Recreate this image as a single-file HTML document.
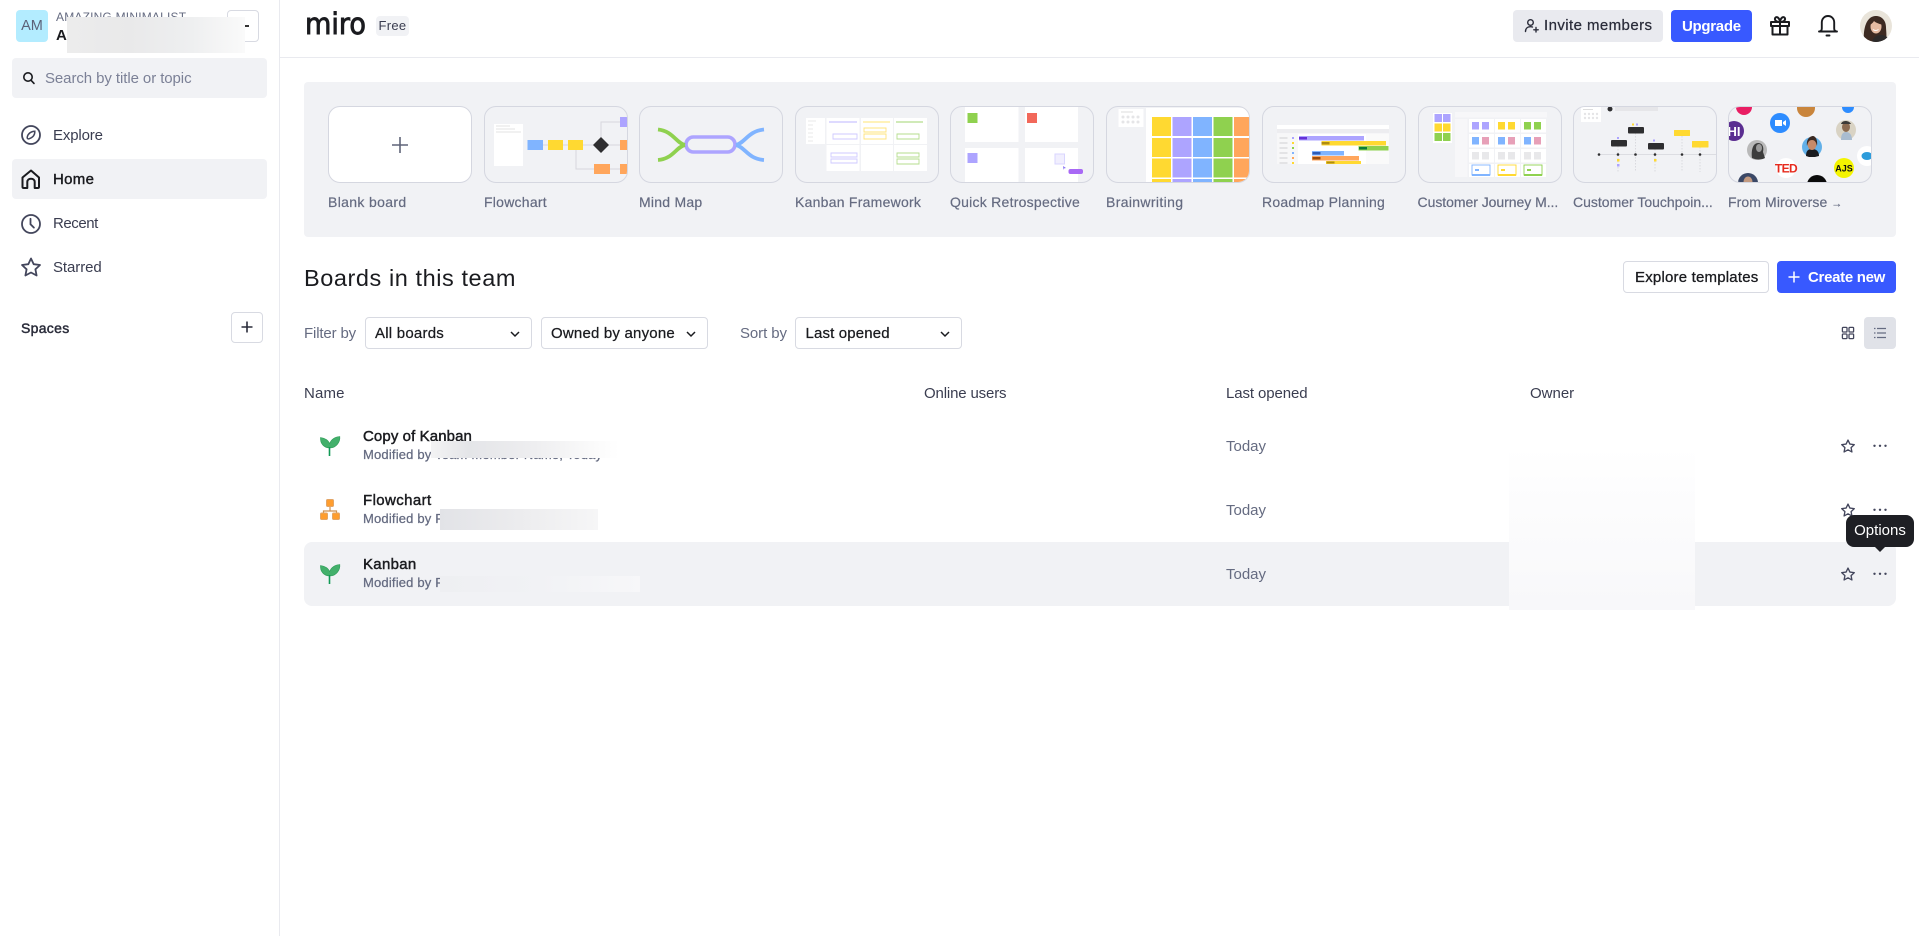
<!DOCTYPE html>
<html lang="en"><head><meta charset="utf-8"><title>Miro</title>
<style>
html,body{margin:0;padding:0;background:#fff;width:1919px;height:936px;overflow:hidden}
body{position:relative;font-family:"Liberation Sans",Arial,sans-serif;font-size:15px;color:#1a1b1f;letter-spacing:0}
.a,.t{position:absolute}
.t{white-space:nowrap;line-height:20px}
.g{color:#656b81}
.m{-webkit-text-stroke:.25px currentColor}
.b{font-weight:700}
.box{position:absolute;box-sizing:border-box;border-radius:4px}
.sel{position:absolute;box-sizing:border-box;top:317px;height:32px;width:167px;border:1px solid #d8dae2;border-radius:4px;background:#fff}
.card{position:absolute;top:106px;width:144px;height:77px;box-sizing:border-box;border:1px solid #d5d7e0;border-radius:12px;overflow:hidden;background:#f1f2f5}
.card svg{position:absolute;left:-1px;top:-1px;display:block}
.lab{position:absolute;top:192px;line-height:20px;font-size:14px;color:#656b81;white-space:nowrap;letter-spacing:.25px;-webkit-text-stroke:.2px #656b81}
svg{position:absolute;overflow:visible}
</style></head><body>

<!-- sidebar -->
<div class="a" style="left:279px;top:0;width:1px;height:936px;background:#e9eaef"></div>
<div class="box" style="left:16px;top:10px;width:32px;height:32px;background:#b3ecff;color:#5c6178;font-size:14.5px;line-height:32px;text-align:center;letter-spacing:0">AM</div>
<div class="t g" style="left:56px;top:7px;font-size:12px;letter-spacing:.2px">AMAZING MINIMALIST</div>
<div class="t b" style="left:56px;top:26px;font-size:15px">A</div>
<div class="box" style="left:227px;top:10px;width:32px;height:32px;border:1px solid #d8dae2;background:#fff"></div>
<div class="a" style="left:245px;top:25px;width:4px;height:2px;background:#333"></div>
<div class="a" style="left:67px;top:17px;width:178px;height:36px;background:linear-gradient(90deg,#ececec,#e9e9ea 35%,#eeeff0 70%,#fafafa)"></div>

<div class="box" style="left:12px;top:58px;width:255px;height:40px;background:#f1f2f5"></div>
<svg style="left:22px;top:71px" width="14" height="16" viewBox="0 0 14 16" fill="none" stroke="#1a1b1f" stroke-width="1.6"><circle cx="6" cy="6" r="4.2"/><path d="M9.2 9.400l2.800 3" stroke-linecap="round"/></svg>
<div class="t" style="left:45px;top:69px;color:#7b8096;letter-spacing:-.08px">Search by title or topic</div>

<svg style="left:21px;top:125px" width="20" height="20" viewBox="0 0 20 20" fill="none" stroke="#43465c" stroke-width="1.8"><circle cx="10" cy="10" r="9"/><path d="M13.8 6.2c.2 3.4-1.6 6.2-5.8 7.6-1.2.3-1.9-.4-1.8-1.6.6-3.3 3.6-5.9 7.6-6z" stroke-width="1.5"/></svg>
<div class="t" style="left:53px;top:126px;color:#3a3d50;letter-spacing:-.15px">Explore</div>

<div class="box" style="left:12px;top:159px;width:255px;height:40px;background:#f1f2f5"></div>
<svg style="left:21px;top:169px" width="20" height="20" viewBox="0 0 20 20" fill="none" stroke="#1a1b1f" stroke-width="2" stroke-linejoin="round"><path d="M1.5 8.5L10 1.5l8 7v9.2c0 .8-.5 1.3-1.3 1.3h-3V13c0-2-1.500-3.300-3.700-3.300S6.300 11 6.300 13v6h-3.500c-.8 0-1.300-.5-1.300-1.300z"/></svg>
<div class="t m" style="left:53px;top:170px;letter-spacing:.3px;-webkit-text-stroke:.4px #1a1b1f">Home</div>

<svg style="left:21px;top:214px" width="20" height="20" viewBox="0 0 20 20" fill="none" stroke="#43465c" stroke-width="1.8" stroke-linecap="round"><circle cx="10" cy="10" r="9"/><path d="M9.500 4.800v5.400l3.400 3.400"/></svg>
<div class="t" style="left:53px;top:214px;color:#3a3d50;letter-spacing:-.45px">Recent</div>

<svg style="left:21px;top:257px" width="20" height="20" viewBox="0 0 20 20" fill="none" stroke="#43465c" stroke-width="1.8" stroke-linejoin="round"><path d="M10 1.500l2.700 5.700 6.300.8-4.600 4.300 1.200 6.200L10 15.500l-5.600 3 1.200-6.200L1 8l6.300-.8z"/></svg>
<div class="t" style="left:53px;top:258px;color:#3a3d50;letter-spacing:-.08px">Starred</div>

<div class="t b" style="left:21px;top:318px;font-size:14px;color:#2a2c3a;letter-spacing:.3px;font-weight:400;-webkit-text-stroke:.45px #2a2c3a">Spaces</div>
<div class="box" style="left:231px;top:312px;width:32px;height:31px;border:1px solid #d8dae2"></div>
<svg style="left:241px;top:321px" width="12" height="12" fill="none" stroke="#2a2c3a" stroke-width="1.600"><path d="M6 .5v11M.5 6h11"/></svg>

<!-- top bar -->
<div class="a" style="left:280px;top:57px;width:1639px;height:1px;background:#e9eaef"></div>
<svg style="left:300px;top:0" width="80" height="50" viewBox="0 0 80 50"><text x="5" y="34" font-family="DejaVu Sans,sans-serif" font-size="29" fill="#1a1b1f" stroke="#1a1b1f" stroke-width=".9" textLength="61" lengthAdjust="spacingAndGlyphs">miro</text></svg>
<div class="box" style="left:376px;top:16px;width:33px;height:20px;background:#f1f2f5;font-size:13px;line-height:20px;text-align:center;color:#3a3d50;letter-spacing:.3px">Free</div>

<div class="box" style="left:1513px;top:10px;width:150px;height:32px;background:#e9eaef"></div>
<svg style="left:1524px;top:18px" width="16" height="16" viewBox="0 0 16 16" fill="none" stroke="#2a2c3a" stroke-width="1.400" stroke-linecap="round"><circle cx="6.500" cy="4.500" r="2.800"/><path d="M1.500 13.500c0-3 2-4.800 5-4.800 .8 0 1.400.1 2 .3M12 9.500v4.500M9.800 11.800h4.400"/></svg>
<div class="t m" style="left:1544px;top:15.500px;color:#2a2c3a;letter-spacing:.42px">Invite members</div>
<div class="box" style="left:1671px;top:10px;width:81px;height:32px;background:#3859ff"></div>
<div class="t b" style="left:1682px;top:16.500px;color:#fff;letter-spacing:-.3px">Upgrade</div>
<svg style="left:1770px;top:15px" width="20" height="21" viewBox="0 0 20 21" fill="none" stroke="#1a1b1f" stroke-width="2" stroke-linejoin="round"><path d="M1 7h18v4H1zM2.500 11h15v8.500h-15zM10 7v12.500M10 7C8 7 5.500 6.500 5 4.500 4.600 2.800 6.300 1.500 7.800 2.500 9 3.300 10 5.500 10 7zM10 7c2 0 4.500-.5 5-2.500.4-1.700-1.300-3-2.800-2C11 3.300 10 5.500 10 7z"/></svg>
<svg style="left:1818px;top:15px" width="20" height="22" viewBox="0 0 20 22" fill="none" stroke="#1a1b1f" stroke-width="1.900" stroke-linecap="round" stroke-linejoin="round"><path d="M1 16.500c2 0 2.800-1 2.800-3V7.500C3.800 3.800 6.400 1 10 1s6.200 2.800 6.200 6.500v6c0 2 .8 3 2.800 3zM8.500 20.500h3"/></svg>
<svg style="left:1860px;top:10px" width="32" height="32" viewBox="0 0 32 32"><defs><clipPath id="av"><circle cx="16" cy="16" r="16"/></clipPath></defs><g clip-path="url(#av)"><rect width="32" height="32" fill="#e9e4da"/><path d="M4 32C3 22 5 7 15 6c7-.5 11 5 11 11 0 3 1 8 0 15z" fill="#3d2a22"/><ellipse cx="16" cy="16.500" rx="5.500" ry="7" fill="#e6bba2"/><path d="M9 16c1-6 7-9 11-7 2 1 3 3 3 6-3-1-7-2-9-4-1 2-3 3-5 5z" fill="#3d2a22"/><path d="M12 32c1-5 5-7 9-7 5 0 8 3 9 7z" fill="#2c2a2a"/><path d="M13 19.500c1.500 1.300 3.500 1.300 5.500 0" stroke="#fff" stroke-width="1" fill="none"/></g></svg>

<!-- template panel -->
<div class="box" style="left:304px;top:82px;width:1592px;height:155px;background:#f1f2f5"></div>

<div class="card" style="left:328px;background:#fff"><svg style="left:49px;top:15.500px" width="44" height="44"><path d="M22 14v16M14 22h16" stroke="#5f6478" stroke-width="1.600" fill="none"/></svg></div>
<div class="lab" style="left:328px;letter-spacing:.35px">Blank board</div>

<div class="card" style="left:484px"><svg width="144" height="77"><rect x="10" y="18" width="29" height="42" fill="#fff"/><path d="M12 20h14M12 23h19M12 26h25" stroke="#e3e3e3" stroke-width="1"/><path d="M59 39h5M79 39h5M99 39h12M123 39h13M117 31V16h19M92 44v19h18M126 63h10" stroke="#d6d7dd" stroke-width="1" fill="none"/><rect x="43.500" y="34" width="15.500" height="10" fill="#80b4ff"/><rect x="64" y="34" width="15" height="10" fill="#ffd931"/><rect x="84" y="34" width="15" height="10" fill="#ffd931"/><path d="M117 31l8 8-8 8-8-8z" fill="#2e2e30"/><rect x="136" y="11" width="7" height="10" fill="#ada4ff"/><rect x="136" y="34" width="7" height="10" fill="#ffa65c"/><rect x="110" y="58" width="16" height="10" fill="#ffa65c"/><rect x="136" y="58" width="7" height="10" fill="#ffa65c"/></svg></div>
<div class="lab" style="left:484px">Flowchart</div>

<div class="card" style="left:639px"><svg width="144" height="77"><rect x="47" y="31" width="49" height="15" rx="7.500" fill="#f1f2f5" stroke="#ada4ff" stroke-width="3.600"/><path d="M46 39c-9-2-12-14-27-15.500M46 39c-9 2-12 14-27 15" stroke="#8fd14f" stroke-width="3.800" fill="none"/><path d="M97 39c9-2 12-14 28-15.500M97 39c9 2 12 14 28 15" stroke="#80b4ff" stroke-width="3.800" fill="none"/></svg></div>
<div class="lab" style="left:639px">Mind Map</div>

<div class="card" style="left:795px"><svg width="144" height="77"><rect x="11" y="12" width="19" height="26" fill="#fff"/><path d="M13 15h8M13 19h5M13 23h5M13 27h5M13 31h5M13 35h5" stroke="#e2e2e2" stroke-width=".8"/><g fill="#fff"><rect x="31.500" y="12" width="33" height="26"/><rect x="66" y="12" width="32" height="26"/><rect x="99" y="12" width="33" height="26"/><rect x="31.500" y="39" width="33" height="26"/><rect x="66" y="39" width="32" height="26"/><rect x="99" y="39" width="33" height="26"/></g><path d="M34 16h28" stroke="#c9c4ff" stroke-width="1.200"/><path d="M68 16h27" stroke="#ffe98f" stroke-width="1.200"/><path d="M101 16h27" stroke="#b5dd8e" stroke-width="1.200"/><g fill="none" stroke-width=".9"><path d="M38 28h24v5H38zM36 47h26v4H36zM36 53h26v4H36z" stroke="#cfcaff"/><path d="M69 22h22v4H69zM69 28h22v5H69z" stroke="#ffe47c"/><path d="M102 28h22v5h-22zM102 47h22v4h-22zM102 53h22v5h-22z" stroke="#b5dd8e"/></g></svg></div>
<div class="lab" style="left:795px">Kanban Framework</div>

<div class="card" style="left:950px"><svg width="144" height="77"><g fill="#fff"><rect x="15" y="1" width="53.500" height="35"/><rect x="75" y="1" width="53" height="35"/><rect x="15" y="42" width="53.500" height="35"/><rect x="75" y="42" width="53" height="35"/></g><rect x="17.500" y="7" width="10" height="10" fill="#8fd14f"/><rect x="77" y="7" width="10" height="10" fill="#f2685a"/><rect x="17.500" y="47" width="10" height="10" fill="#ada4ff"/><rect x="105" y="48" width="9.500" height="10" fill="#f1effe" stroke="#d9d5ff"/><path d="M113 60l3 2-2 .5-.5 1.500z" fill="#8a75f5"/><rect x="118.500" y="63" width="14.500" height="5" rx="2" fill="#a868f5"/></svg></div>
<div class="lab" style="left:950px">Quick Retrospective</div>

<div class="card" style="left:1106px"><svg width="144" height="77"><rect x="12.500" y="3" width="25" height="18" fill="#fff"/><path d="M15 6h12" stroke="#ddd" stroke-width="1"/><g fill="#e5e5e7"><circle cx="17" cy="11" r="1.500"/><circle cx="22" cy="11" r="1.500"/><circle cx="27" cy="11" r="1.500"/><circle cx="32" cy="11" r="1.500"/><circle cx="17" cy="16" r="1.500"/><circle cx="22" cy="16" r="1.500"/><circle cx="27" cy="16" r="1.500"/><circle cx="32" cy="16" r="1.500"/></g><rect x="40" y="2" width="104" height="75" fill="#fff"/><g fill="#ffd931"><rect x="46" y="11" width="19" height="19"/><rect x="46" y="32" width="19" height="19"/><rect x="46" y="52.500" width="19" height="19"/><rect x="46" y="73" width="19" height="5"/></g><g fill="#ada4ff"><rect x="66.500" y="11" width="19" height="19"/><rect x="66.500" y="32" width="19" height="19"/><rect x="66.500" y="52.500" width="19" height="19"/><rect x="66.500" y="73" width="19" height="5"/></g><g fill="#80b4ff"><rect x="87" y="11" width="19" height="19"/><rect x="87" y="32" width="19" height="19"/><rect x="87" y="52.500" width="19" height="19"/><rect x="87" y="73" width="19" height="5"/></g><g fill="#8fd14f"><rect x="107.500" y="11" width="19" height="19"/><rect x="107.500" y="32" width="19" height="19"/><rect x="107.500" y="52.500" width="19" height="19"/><rect x="107.500" y="73" width="19" height="5"/></g><g fill="#ffa65c"><rect x="128" y="11" width="17" height="19"/><rect x="128" y="32" width="17" height="19"/><rect x="128" y="52.500" width="17" height="19"/><rect x="128" y="73" width="17" height="5"/></g></svg></div>
<div class="lab" style="left:1106px;letter-spacing:.35px">Brainwriting</div>

<div class="card" style="left:1262px"><svg width="144" height="77"><rect x="15" y="19" width="112" height="39" fill="#fff"/><rect x="15" y="23" width="112" height="4.500" fill="#ededf0"/><rect x="15" y="28" width="21" height="30" fill="#f7f7f8"/><rect x="104" y="28" width="23" height="30" fill="#fafafa"/><g fill="#e3e3e5"><rect x="17.500" y="31" width="8" height="2"/><rect x="17.500" y="36" width="8" height="2"/><rect x="17.500" y="41" width="8" height="2"/><rect x="17.500" y="46" width="8" height="2"/><rect x="17.500" y="51" width="8" height="2"/><rect x="17.500" y="56" width="8" height="2"/></g><rect x="30" y="31" width="2" height="2" fill="#ada4ff"/><rect x="30" y="36" width="2" height="2" fill="#ffd931"/><rect x="30" y="41" width="2" height="2" fill="#8fd14f"/><rect x="30" y="46" width="2" height="2" fill="#80b4ff"/><rect x="30" y="51" width="2" height="2" fill="#ffa65c"/><rect x="30" y="56" width="2" height="2" fill="#ffd931"/><rect x="37" y="30" width="65" height="4.500" fill="#ada4ff"/><rect x="37" y="31" width="8" height="2.500" fill="#6631d7"/><rect x="59.500" y="35" width="64.500" height="4.500" fill="#ffd931"/><rect x="59.500" y="36" width="8" height="2.500" fill="#b08c10"/><rect x="96.500" y="40" width="30" height="4.500" fill="#8fd14f"/><rect x="97" y="41" width="8" height="2.500" fill="#0c7c3a"/><rect x="50" y="45" width="32" height="4.500" fill="#80b4ff"/><rect x="50.500" y="46" width="8" height="2.500" fill="#2d5cb5"/><rect x="50" y="50" width="47" height="4.500" fill="#ffa65c"/><rect x="50.500" y="51" width="8" height="2.500" fill="#9a4d0d"/><rect x="64" y="55" width="35" height="3" fill="#ffd931"/><rect x="64.500" y="55.500" width="8" height="2" fill="#b08c10"/></svg></div>
<div class="lab" style="left:1262px">Roadmap Planning</div>

<div class="card" style="left:1417.5px"><svg width="144" height="77"><rect x="15" y="7" width="19" height="30" fill="#fff"/><g fill="#ada4ff"><rect x="16.500" y="8" width="7.500" height="8"/><rect x="25" y="8" width="7.500" height="8"/></g><g fill="#ffd931"><rect x="16.500" y="17.500" width="7.500" height="8"/><rect x="25" y="17.500" width="7.500" height="8"/></g><g fill="#8fd14f"><rect x="16.500" y="27" width="7.500" height="8"/><rect x="25" y="27" width="7.500" height="8"/></g><rect x="37" y="6" width="92" height="5.500" fill="#f7f7f9"/><rect x="37" y="13" width="12.500" height="58" fill="#f7f7f9"/><g fill="#fff"><rect x="51" y="13" width="25" height="13.500"/><rect x="77" y="13" width="25" height="13.500"/><rect x="103" y="13" width="25" height="13.500"/><rect x="51" y="28" width="25" height="13.500"/><rect x="77" y="28" width="25" height="13.500"/><rect x="103" y="28" width="25" height="13.500"/><rect x="51" y="43" width="25" height="13.500"/><rect x="77" y="43" width="25" height="13.500"/><rect x="103" y="43" width="25" height="13.500"/><rect x="51" y="58" width="25" height="13"/><rect x="77" y="58" width="25" height="13"/><rect x="103" y="58" width="25" height="13"/></g><g fill="#ada4ff"><rect x="54" y="16" width="7" height="7.500"/><rect x="64" y="16" width="7" height="7.500"/></g><g fill="#ffd931"><rect x="80" y="16" width="7" height="7.500"/><rect x="90" y="16" width="7" height="7.500"/></g><g fill="#8fd14f"><rect x="106" y="16" width="7" height="7.500"/><rect x="116" y="16" width="7" height="7.500"/></g><g fill="#80b4ff"><rect x="54" y="31" width="7" height="7.500"/><rect x="80" y="31" width="7" height="7.500"/><rect x="106" y="31" width="7" height="7.500"/></g><g fill="#e7a0b8"><rect x="64" y="31" width="7" height="7.500"/><rect x="90" y="31" width="7" height="7.500"/><rect x="116" y="31" width="7" height="7.500"/></g><g fill="#e8e8ea"><rect x="54" y="46" width="7" height="7.500"/><rect x="64" y="46" width="7" height="7.500"/><rect x="80" y="46" width="7" height="7.500"/><rect x="90" y="46" width="7" height="7.500"/><rect x="106" y="46" width="7" height="7.500"/><rect x="116" y="46" width="7" height="7.500"/></g><g fill="#fff" stroke-width=".9"><rect x="54" y="59" width="18" height="10" stroke="#80b4ff"/><rect x="80" y="59" width="18" height="10" stroke="#ffd931"/><rect x="106" y="59" width="18" height="10" stroke="#8fd14f"/></g><rect x="54" y="68" width="18" height="2" fill="#80b4ff"/><rect x="80" y="68" width="18" height="2" fill="#ffd931"/><rect x="106" y="68" width="18" height="2" fill="#8fd14f"/><rect x="57" y="63" width="4" height="2" fill="#80b4ff"/><rect x="83" y="63" width="4" height="2" fill="#ffd931"/><rect x="109" y="63" width="4" height="2" fill="#8fd14f"/></svg></div>
<div class="lab" style="left:1417.5px;letter-spacing:-.04px">Customer Journey M...</div>

<div class="card" style="left:1573px"><svg width="144" height="77"><rect x="8" y="1" width="20" height="15" fill="#fff"/><path d="M10 3.500h10" stroke="#ddd"/><g fill="#e5e5e7"><circle cx="12" cy="8" r="1.200"/><circle cx="16" cy="8" r="1.200"/><circle cx="20" cy="8" r="1.200"/><circle cx="24" cy="8" r="1.200"/><circle cx="12" cy="12" r="1.200"/><circle cx="16" cy="12" r="1.200"/><circle cx="20" cy="12" r="1.200"/><circle cx="24" cy="12" r="1.200"/></g><circle cx="37" cy="3" r="2.500" fill="#2e2e30"/><rect x="42" y="1" width="43" height="4" fill="#e6e6e9"/><path d="M25 48.500h119" stroke="#dcdde2" stroke-width="1"/><path d="M45 40v26M62.500 27v38M82 43v23M109 30v36M127 41v25" stroke="#cfcfd4" stroke-width=".7" stroke-dasharray="1.500 1.500"/><g fill="#2e2e30"><circle cx="26" cy="48.500" r="1.300"/><circle cx="45" cy="48.500" r="1.300"/><circle cx="62.500" cy="48.500" r="1.300"/><circle cx="82" cy="48.500" r="1.300"/><circle cx="109" cy="48.500" r="1.300"/><circle cx="127" cy="48.500" r="1.300"/><rect x="38" y="34" width="16" height="6.500" rx="1"/><rect x="55" y="21" width="16" height="6.500" rx="1"/><rect x="75" y="37" width="16" height="6.500" rx="1"/></g><g fill="#ffd931"><rect x="101" y="24" width="16" height="6" rx=".5"/><rect x="119" y="35" width="16.500" height="6.500" rx=".5"/><rect x="44" y="53" width="2.500" height="2.500"/><rect x="81" y="53" width="2.500" height="2.500"/><rect x="59" y="17.500" width="2" height="2"/></g><g fill="#ada4ff"><rect x="44" y="58" width="2.500" height="2.500"/><rect x="44" y="31" width="2" height="2"/><rect x="63" y="17.500" width="2" height="2"/><rect x="80" y="33.500" width="2" height="2"/></g></svg></div>
<div class="lab" style="left:1573px;letter-spacing:0">Customer Touchpoin...</div>

<div class="card" style="left:1728px"><svg width="144" height="77"><circle cx="16" cy="1" r="8" fill="#e91e63"/><circle cx="78" cy="2" r="9" fill="#c9853c"/><circle cx="120" cy="1" r="6" fill="#2d8cff"/><circle cx="52" cy="17" r="10" fill="#2d8cff"/><path d="M47 14h7v6h-7zM55 16l3-2v6l-3-2z" fill="#fff"/><circle cx="6" cy="25" r="10" fill="#5b2e91"/><text x="6" y="30" text-anchor="middle" font-family="Liberation Sans,sans-serif" font-size="13" font-weight="700" fill="#fff">HI</text><circle cx="118" cy="24" r="10" fill="#d9d3c4"/><path d="M113 34c0-6 2-8 5-8s6 2 6 8z" fill="#a9bcd0"/><ellipse cx="118" cy="21" rx="4" ry="5" fill="#8b6a50"/><path d="M113 18c1-4 8-4 10 0z" fill="#3c3a38"/><circle cx="84" cy="41" r="10" fill="#62b0e8"/><path d="M78 50c0-5 2-7 6-7s7 2 7 7l-4 1h-6z" fill="#1a1b1f"/><ellipse cx="84" cy="38" rx="4.500" ry="6" fill="#c68a68"/><path d="M79 40c-1-8 4-10 6-10s5 3 4 10c-1-4-2-6-5-6s-4 2-5 6z" fill="#3b2a22"/><circle cx="29" cy="44" r="10" fill="#b9b9b9"/><path d="M24 52c-1-8 1-15 6-15s6 5 5 9l2 6c-3 2-9 2-13 0z" fill="#3c3c3c"/><ellipse cx="31" cy="42" rx="3" ry="4" fill="#9a9a9a"/><circle cx="58" cy="62" r="10" fill="#fff"/><text x="58" y="66.500" text-anchor="middle" font-family="Liberation Sans,sans-serif" font-size="12" font-weight="700" fill="#e62b1e" letter-spacing="-.6">TED</text><circle cx="116" cy="62" r="10" fill="#f4f400"/><text x="116" y="65.500" text-anchor="middle" font-family="Liberation Sans,sans-serif" font-size="9" font-weight="700" fill="#111">AJS</text><circle cx="139" cy="50" r="10" fill="#fff"/><ellipse cx="139" cy="50" rx="5.500" ry="4" fill="#2d9cdb"/><circle cx="20" cy="77" r="10" fill="#3b4866"/><ellipse cx="20" cy="76" rx="4.500" ry="5.500" fill="#c39a80"/><circle cx="89" cy="79" r="10" fill="#0b0b0b"/></svg></div>
<div class="lab" style="left:1728px;letter-spacing:.1px">From Miroverse <span style="font-size:11px;letter-spacing:-1px">→</span></div>

<!-- heading -->
<div class="t" style="left:304px;top:263px;font-size:23.500px;line-height:30px;letter-spacing:.57px;color:#1a1b1f">Boards in this team</div>
<div class="box" style="left:1623px;top:261px;width:146px;height:32px;border:1px solid #d8dae2;background:#fff"></div>
<div class="t m" style="left:1635px;top:267.500px;letter-spacing:.2px;-webkit-text-stroke:.3px #1a1b1f">Explore templates</div>
<div class="box" style="left:1777px;top:261px;width:119px;height:32px;background:#3859ff"></div>
<svg style="left:1788px;top:271px" width="12" height="12" fill="none" stroke="#fff" stroke-width="1.500"><path d="M6 .5v11M.5 6h11"/></svg>
<div class="t b" style="left:1808px;top:267.500px;color:#fff;letter-spacing:-.3px">Create new</div>

<!-- filters -->
<div class="t g" style="left:304px;top:324px;letter-spacing:-.15px">Filter by</div>
<div class="sel" style="left:364.500px"></div>
<div class="t m" style="left:375px;top:324px;letter-spacing:.23px">All boards</div>
<svg style="left:510px;top:331px" width="10" height="6" fill="none" stroke="#1a1b1f" stroke-width="1.500"><path d="M1 1l4 4 4-4"/></svg>
<div class="sel" style="left:540.500px"></div>
<div class="t m" style="left:551px;top:324px;letter-spacing:.2px">Owned by anyone</div>
<svg style="left:686px;top:331px" width="10" height="6" fill="none" stroke="#1a1b1f" stroke-width="1.500"><path d="M1 1l4 4 4-4"/></svg>
<div class="t g" style="left:740px;top:324px;letter-spacing:-.08px">Sort by</div>
<div class="sel" style="left:794.500px"></div>
<div class="t m" style="left:805.500px;top:324px;letter-spacing:.15px">Last opened</div>
<svg style="left:940px;top:331px" width="10" height="6" fill="none" stroke="#1a1b1f" stroke-width="1.500"><path d="M1 1l4 4 4-4"/></svg>

<svg style="left:1842px;top:327px" width="12" height="12" fill="none" stroke="#43465c" stroke-width="1.300"><rect x=".4" y=".4" width="4.600" height="4.600" rx=".8"/><rect x="7" y=".4" width="4.600" height="4.600" rx=".8"/><rect x=".4" y="7" width="4.600" height="4.600" rx=".8"/><rect x="7" y="7" width="4.600" height="4.600" rx=".8"/></svg>
<div class="box" style="left:1864px;top:317px;width:32px;height:32px;background:#e0e2e8"></div>
<svg style="left:1874px;top:327px" width="12" height="12" fill="none" stroke="#656b81" stroke-width="1.200"><path d="M0 1.500h1.500M3 1.500h9M0 6h1.500M3 6h9M0 10.500h1.500M3 10.500h9"/></svg>

<!-- table -->
<div class="t" style="left:304px;top:384px;color:#3a3d50;letter-spacing:.15px">Name</div>
<div class="t" style="left:924px;top:384px;color:#3a3d50;letter-spacing:-.15px">Online users</div>
<div class="t" style="left:1226px;top:384px;color:#3a3d50;letter-spacing:-.1px">Last opened</div>
<div class="t" style="left:1530px;top:384px;color:#3a3d50">Owner</div>

<div class="box" style="left:304px;top:542px;width:1592px;height:64px;border-radius:8px;background:#f1f2f5"></div>

<svg style="left:320px;top:436px" width="20" height="20" viewBox="0 0 20 20"><path d="M.5 1.500C4 2 8 3.500 9.700 7.500 11 3.500 15 .8 19.800.5 20.500 6 16 12 10 12 4 12 0 7.500.5 1.500z" fill="#43b06b" stroke="#2e9c58" stroke-width=".6"/><path d="M9.500 11v9" stroke="#119a55" stroke-width="1.600"/></svg>
<div class="t m" style="left:363px;top:427px;letter-spacing:.1px;-webkit-text-stroke:.45px #1a1b1f">Copy of Kanban</div>
<div class="t m" style="left:363px;top:445px;font-size:13px;color:#656b81;letter-spacing:.18px">Modified by Team Member Name, Today</div>
<div class="a" style="left:431px;top:441px;width:188px;height:17px;background:linear-gradient(90deg,#f3f3f4,#e4e5e8 20%,#eeeef0 55%,#fafafa 85%,#fff)"></div>
<div class="t g" style="left:1226px;top:437px">Today</div>

<svg style="left:320px;top:499px" width="20" height="21" viewBox="0 0 20 21" fill="none"><path d="M10 8v4M3.500 14v-2h13v2" stroke="#cf9150" stroke-width="1.200"/><g fill="#ff9d2e" stroke="#e2a566" stroke-width="1"><rect x="6.500" y=".5" width="7" height="7" rx="1.200"/><rect x=".5" y="14" width="7" height="6.500" rx="1.200"/><rect x="12.500" y="14" width="7" height="6.500" rx="1.200"/></g></svg>
<div class="t m" style="left:363px;top:491px;letter-spacing:.4px;-webkit-text-stroke:.45px #1a1b1f">Flowchart</div>
<div class="t m" style="left:363px;top:509px;font-size:13px;color:#656b81;letter-spacing:.18px">Modified by F</div>
<div class="a" style="left:439.500px;top:509px;width:158.500px;height:21px;background:linear-gradient(90deg,#e2e3e7,#ececee 50%,#f6f6f7)"></div>
<div class="t g" style="left:1226px;top:501px">Today</div>

<svg style="left:320px;top:564px" width="20" height="20" viewBox="0 0 20 20"><path d="M.5 1.500C4 2 8 3.500 9.700 7.500 11 3.500 15 .8 19.800.5 20.500 6 16 12 10 12 4 12 0 7.500.5 1.500z" fill="#43b06b" stroke="#2e9c58" stroke-width=".6"/><path d="M9.500 11v9" stroke="#119a55" stroke-width="1.600"/></svg>
<div class="t m" style="left:363px;top:555px;letter-spacing:.3px;-webkit-text-stroke:.45px #1a1b1f">Kanban</div>
<div class="t m" style="left:363px;top:573px;font-size:13px;color:#656b81;letter-spacing:.18px">Modified by F</div>
<div class="a" style="left:439.500px;top:576px;width:200.500px;height:16px;background:linear-gradient(90deg,#eeeff2,#f1f2f5 50%,#f7f7f9)"></div>
<div class="t g" style="left:1226px;top:565px">Today</div>

<div class="a" style="left:1509px;top:447px;width:186px;height:163px;background:linear-gradient(180deg,#fff,#fcfcfd 35%,#f8f8fa)"></div>

<svg style="left:1841px;top:439px" width="14" height="14" viewBox="0 0 20 20" fill="none" stroke="#43465c" stroke-width="1.900" stroke-linejoin="round"><path d="M10 1.500l2.700 5.700 6.300.8-4.600 4.300 1.200 6.200L10 15.500l-5.600 3 1.200-6.200L1 8l6.300-.8z"/></svg>
<svg style="left:1841px;top:503px" width="14" height="14" viewBox="0 0 20 20" fill="none" stroke="#43465c" stroke-width="1.900" stroke-linejoin="round"><path d="M10 1.500l2.700 5.700 6.300.8-4.600 4.300 1.200 6.200L10 15.500l-5.600 3 1.200-6.200L1 8l6.300-.8z"/></svg>
<svg style="left:1841px;top:567px" width="14" height="14" viewBox="0 0 20 20" fill="none" stroke="#43465c" stroke-width="1.900" stroke-linejoin="round"><path d="M10 1.500l2.700 5.700 6.300.8-4.600 4.300 1.200 6.200L10 15.500l-5.600 3 1.200-6.200L1 8l6.300-.8z"/></svg>
<svg style="left:1873px;top:444px" width="14" height="4" fill="#43465c"><circle cx="1.500" cy="1.800" r="1.200"/><circle cx="7" cy="1.800" r="1.200"/><circle cx="12.500" cy="1.800" r="1.200"/></svg>
<svg style="left:1873px;top:508px" width="14" height="4" fill="#43465c"><circle cx="1.500" cy="1.800" r="1.200"/><circle cx="7" cy="1.800" r="1.200"/><circle cx="12.500" cy="1.800" r="1.200"/></svg>
<svg style="left:1873px;top:572px" width="14" height="4" fill="#43465c"><circle cx="1.500" cy="1.800" r="1.200"/><circle cx="7" cy="1.800" r="1.200"/><circle cx="12.500" cy="1.800" r="1.200"/></svg>

<div class="box" style="left:1846px;top:515px;width:68px;height:32px;border-radius:8px;background:#1e1f24;color:#fff;text-align:center;line-height:32px;letter-spacing:0">Options</div>
<svg style="left:1875px;top:547px" width="10" height="6" fill="#1e1f24"><path d="M0 0h10L5 5z"/></svg>

</body></html>
